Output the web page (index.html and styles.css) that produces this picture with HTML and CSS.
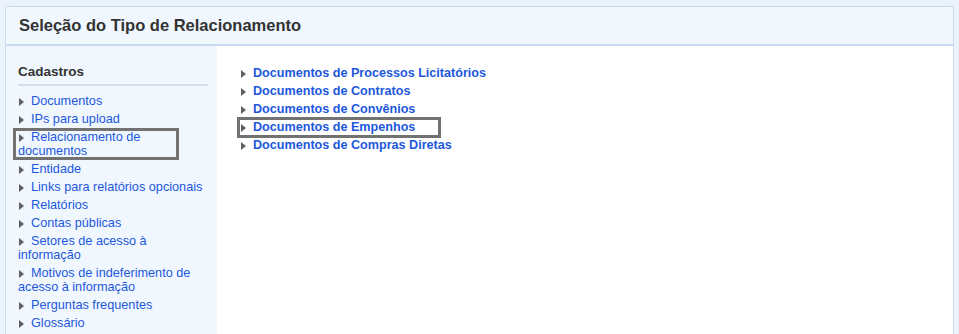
FILE: index.html
```html
<!DOCTYPE html>
<html lang="pt-BR">
<head>
    <meta charset="UTF-8">
    <title>Seleção do Tipo de Relacionamento</title>
    <link rel="stylesheet" href="styles.css">
</head>
<body>
  <div class="panel">
    <div class="panel-head">Seleção do Tipo de Relacionamento</div>
    <div class="panel-body">
      <div class="sidebar">
        <h3>Cadastros</h3>
        <ul class="menu">
          <li><a href="#"><span class="arrow"></span>Documentos</a></li>
          <li><a href="#"><span class="arrow"></span>IPs para upload</a></li>
          <li class="marked"><a href="#"><span class="arrow"></span>Relacionamento de documentos</a></li>
          <li><a href="#"><span class="arrow"></span>Entidade</a></li>
          <li><a href="#"><span class="arrow"></span>Links para relatórios opcionais</a></li>
          <li><a href="#"><span class="arrow"></span>Relatórios</a></li>
          <li><a href="#"><span class="arrow"></span>Contas públicas</a></li>
          <li><a href="#"><span class="arrow"></span>Setores de acesso à informação</a></li>
          <li><a href="#"><span class="arrow"></span>Motivos de indeferimento de acesso à informação</a></li>
          <li><a href="#"><span class="arrow"></span>Perguntas frequentes</a></li>
          <li><a href="#"><span class="arrow"></span>Glossário</a></li>
        </ul>
      </div>
      <div class="content">
        <ul class="tipos">
          <li><a href="#"><span class="arrow"></span>Documentos de Processos Licitatórios</a></li>
          <li><a href="#"><span class="arrow"></span>Documentos de Contratos</a></li>
          <li><a href="#"><span class="arrow"></span>Documentos de Convênios</a></li>
          <li class="marked"><a href="#"><span class="arrow"></span>Documentos de Empenhos</a></li>
          <li><a href="#"><span class="arrow"></span>Documentos de Compras Diretas</a></li>
        </ul>
      </div>
    </div>
  </div>
</body>
</html>
```
FILE: styles.css
```css
body{
    margin: 0;
    padding: 6px 5px 0 5px;
    background-color: #eaf2fc;
    font-family: "Liberation Sans", Arial, sans-serif;
}
.panel{
    background-color: white;
    border: 1px solid #c8dbf0;
    border-bottom: none;
    border-radius: 4px 4px 0 0;
    overflow: hidden;
}
.panel-head{
    height: 37px;
    line-height: 37px;
    padding-left: 13px;
    background-color: #f0f7ff;
    border-bottom: 2px solid #c8dbf0;
    font-size: 16.5px;
    font-weight: bold;
    color: #333;
}
.panel-body{
    display: flex;
    height: 300px;
}
.sidebar{
    width: 190px;
    padding: 18px 9px 0 12px;
    background-color: #f0f7ff;
}
.sidebar h3{
    margin: 0;
    padding-bottom: 4px;
    font-size: 13.5px;
    line-height: 16px;
    color: #333;
    border-bottom: 2px solid #cfdff0;
}
ul{
    list-style: none;
    margin: 0;
    padding: 0;
}
a{
    color: #1d58dc;
    text-decoration: none;
}
.arrow{
    display: inline-block;
    width: 0;
    height: 0;
    border-top: 4px solid transparent;
    border-bottom: 4px solid transparent;
    border-left: 5px solid #5f5f5f;
    margin-left: 1px;
    margin-right: 7px;
    vertical-align: -1px;
}
.menu{
    margin-top: 8px;
}
.menu li{
    position: relative;
    font-size: 12.7px;
    line-height: 14px;
    margin-bottom: 4px;
}
.content{
    flex: 1;
    padding: 18px 0 0 23px;
}
.tipos li{
    position: relative;
    font-size: 12.6px;
    font-weight: bold;
    line-height: 18px;
}
.marked::after{
    content: "";
    position: absolute;
    border: 3px solid #727272;
    pointer-events: none;
}
.menu .marked::after{
    left: -5px;
    top: -2px;
    width: 160px;
    height: 26px;
}
.tipos .marked::after{
    left: -3px;
    top: -1px;
    width: 198px;
    height: 15px;
}
```
